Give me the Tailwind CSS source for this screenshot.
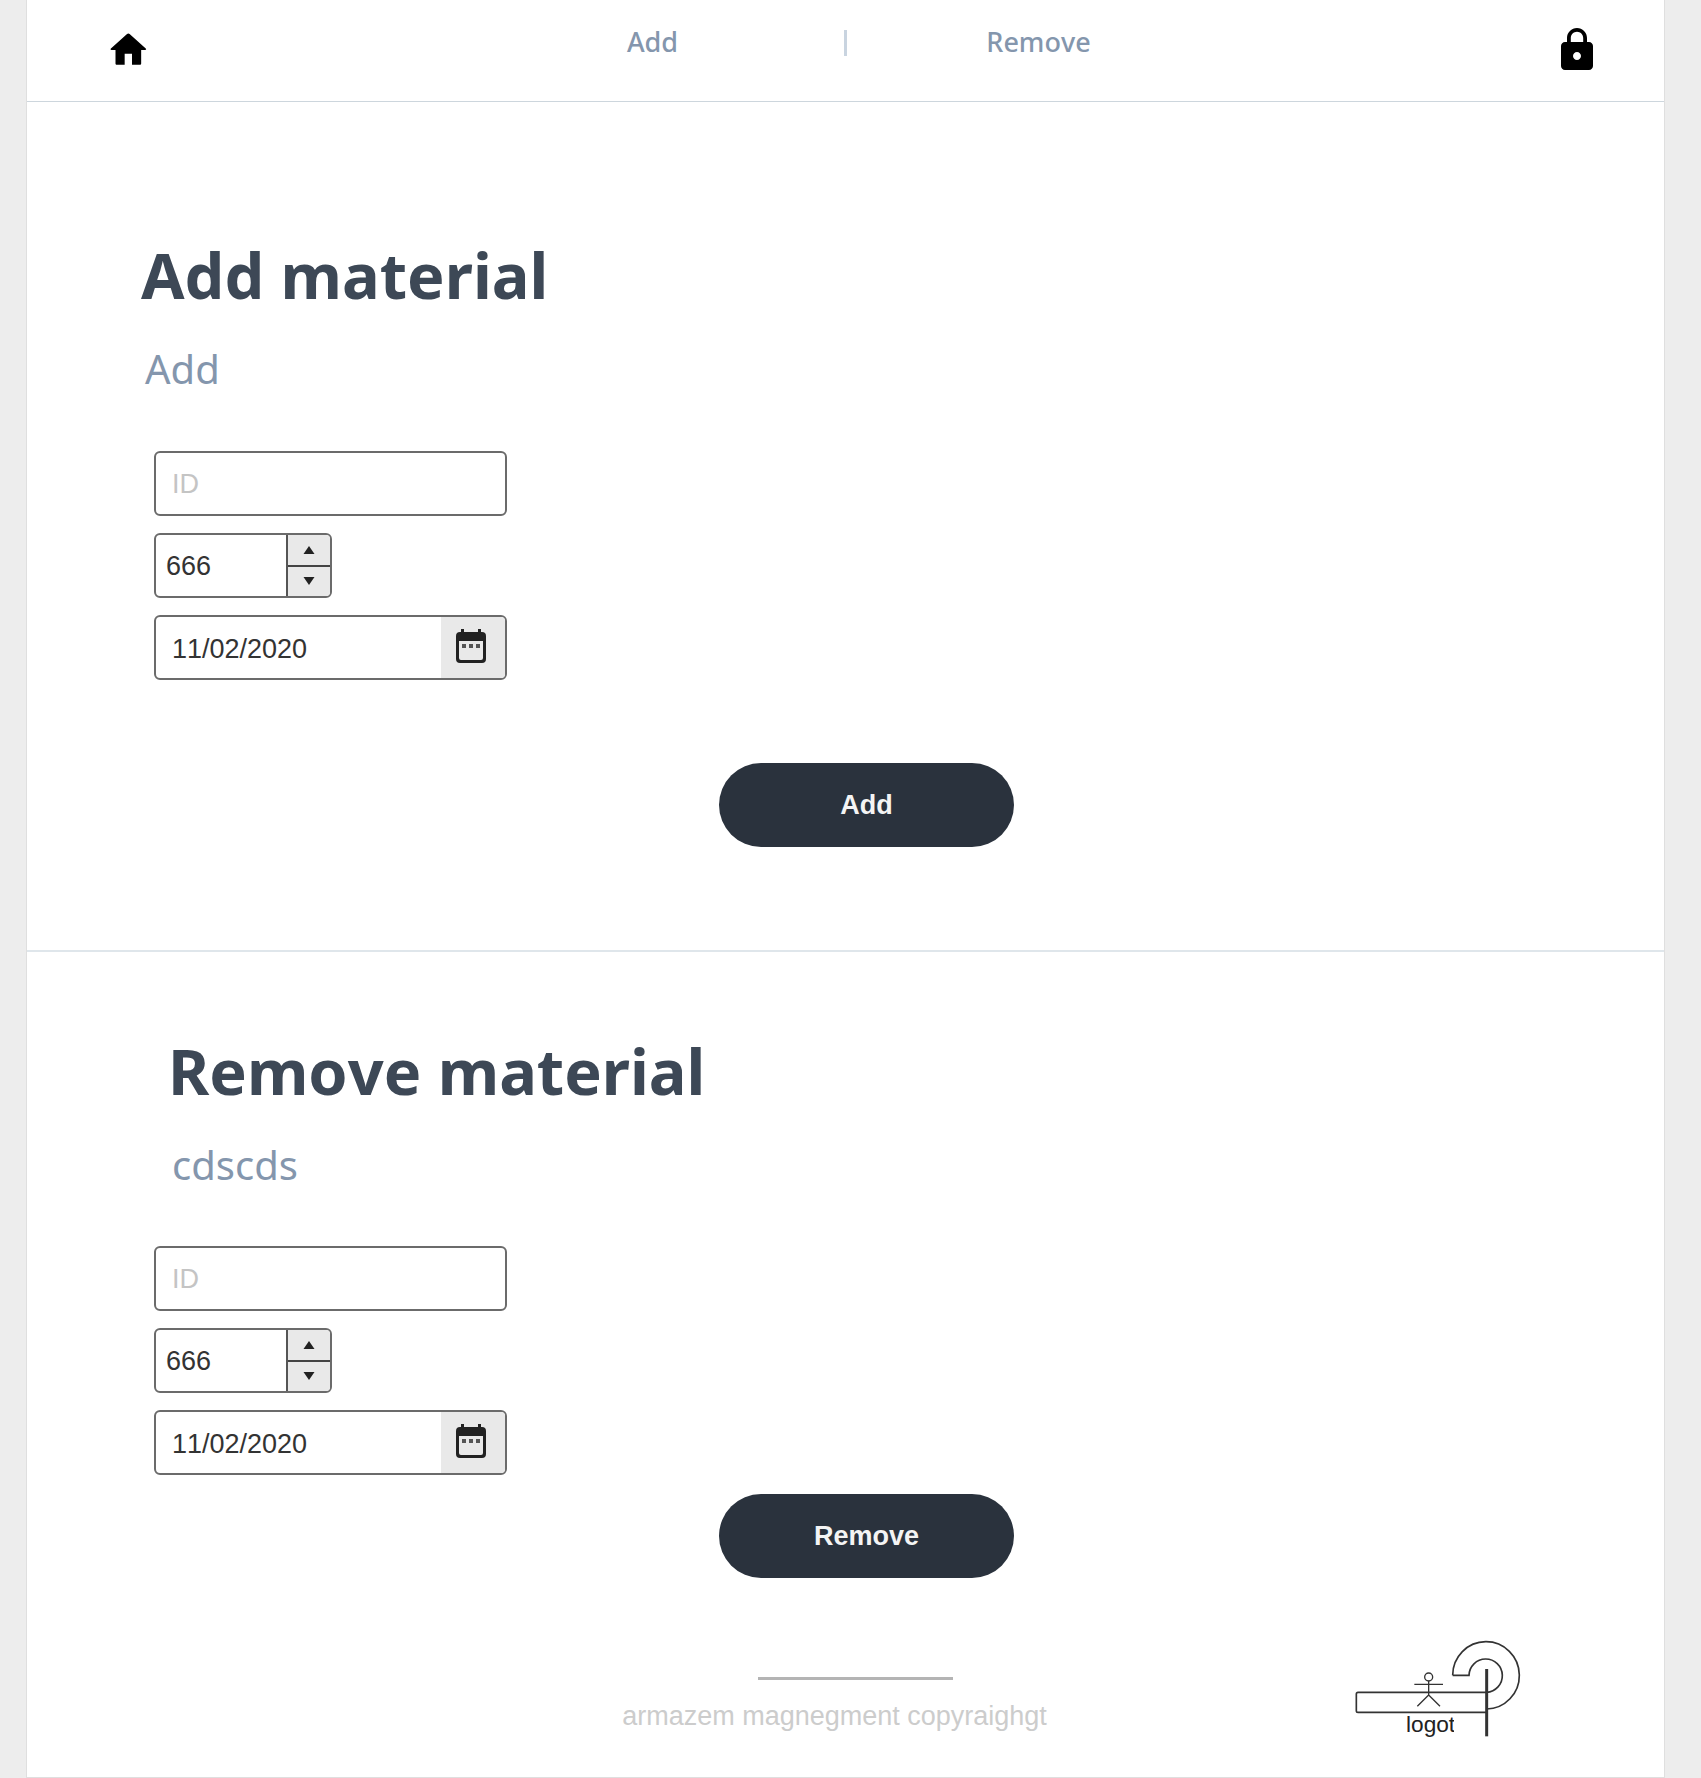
<!DOCTYPE html>
<html lang="en">
<head>
<meta charset="utf-8">
<meta name="viewport" content="width=device-width, initial-scale=1">
<title>Armazem</title>
<script src="https://cdn.jsdelivr.net/npm/@tailwindcss/browser@4"></script>
</head>
<body class="bg-[#ededed] font-['Liberation_Sans',Arial,sans-serif] text-[27px] leading-8 text-[#333] [font-kerning:none]">
<div class="ml-[26px] mr-[36px] border-x border-b border-[#dfdfdf] bg-white">

  <header class="grid h-[102px] grid-cols-[1fr_auto_1fr] items-start border-b border-[#cdd6dd] pl-[83px] pr-[70px]">
    <a href="#" aria-label="Home" class="mt-7 justify-self-start">
      <svg class="h-11 w-11" viewBox="2 0 24 24" fill="#000"><path d="M10 20v-6h4v6h4.300c.4 0 .7-.3.7-.7V12h2.200c.5 0 .7-.5.3-.8L12.700 3.300c-.4-.4-1-.4-1.400 0L2.500 11.200c-.4.3-.2.8.3.8H5v7.300c0 .4.3.7.7.7H10z"/></svg>
    </a>
    <nav class="mr-[13px] mt-6 grid w-[579px] grid-cols-3 justify-items-center font-['Noto_Sans',sans-serif] font-medium leading-9 text-[#8496ad]">
      <a href="#add">Add</a>
      <span class="mt-[6px] h-[26px] w-[3px] bg-[#c9d4e0]"></span>
      <a href="#remove">Remove</a>
    </nav>
    <a href="#" aria-label="Lock" class="mt-7 justify-self-end">
      <svg class="h-[42px] w-[34px]" viewBox="4 1 16 21" fill="#000"><path d="M18 8h-1V6c0-2.760-2.240-5-5-5S7 3.240 7 6v2H6c-1.100 0-2 .9-2 2v10c0 1.100.9 2 2 2h12c1.100 0 2-.9 2-2V10c0-1.100-.9-2-2-2zm-6 9c-1.100 0-2-.9-2-2s.9-2 2-2 2 .9 2 2-.9 2-2 2zm3.100-9H8.900V6c0-1.710 1.390-3.100 3.100-3.100s3.100 1.390 3.100 3.100v2z"/></svg>
    </a>
  </header>

  <main>
    <section id="add" class="border-b-2 border-[#dfe6eb] px-[127px] pb-[103px] pt-[133px]">
      <div class="-ml-[13px] font-['Noto_Sans',sans-serif]">
        <h1 class="text-[63px] font-bold leading-[80px] text-[#3d4856]">Add material</h1>
        <p class="ml-1 mt-[26px] text-[40px] leading-[56px] text-[#8496ad]">Add</p>
      </div>
      <form>
        <div class="mt-[54px] flex flex-col items-start gap-[17px]">
          <input type="text" aria-label="ID" placeholder="ID" class="h-[65px] w-[353px] rounded-md border-2 border-[#6b6b6b] bg-white px-4 pt-[2px] placeholder:text-[#c4c4c4]">
          <div class="flex h-[65px] w-[178px] overflow-hidden rounded-md border-2 border-[#6b6b6b] bg-white">
            <input type="number" aria-label="Quantity" value="666" class="min-w-0 flex-1 pl-[10px] [appearance:textfield] [&::-webkit-inner-spin-button]:appearance-none">
            <div class="flex w-11 flex-col border-l-2 border-[#555] bg-[#e9e9e9]">
              <button type="button" aria-label="Increase" class="flex flex-1 items-center justify-center border-b-2 border-[#444]"><svg class="h-2 w-3" viewBox="0 0 12 8" fill="#222"><path d="M6 0l5.500 8H.5z"/></svg></button>
              <button type="button" aria-label="Decrease" class="flex flex-1 items-center justify-center"><svg class="h-2 w-3" viewBox="0 0 12 8" fill="#222"><path d="M6 8L.5 0h11z"/></svg></button>
            </div>
          </div>
          <div class="flex h-[65px] w-[353px] overflow-hidden rounded-md border-2 border-[#6b6b6b] bg-white">
            <input type="text" aria-label="Date" value="11/02/2020" class="min-w-0 flex-1 pl-4 pt-[2px]">
            <button type="button" aria-label="Open calendar" class="flex w-16 items-center justify-center bg-[#e9e9e9] pb-1 pr-1">
              <svg class="h-[34px] w-[30px]" viewBox="0 0 30 34"><path fill="#222" d="M5 0h3v3h14V0h3v3h1q4 0 4 4v23q0 4-4 4H4q-4 0-4-4V7q0-4 4-4h1zM3 12v17q0 2 2 2h20q2 0 2-2V12z"/><path fill="#555" d="M6 15h4v4H6zm7 0h4v4h-4zm7 0h4v4h-4z"/></svg>
            </button>
          </div>
        </div>
        <div class="mt-[83px] flex justify-center pl-[42px]">
          <button type="submit" class="h-[84px] w-[295px] rounded-full bg-[#2a323d] font-bold text-[#f4f4f4]">Add</button>
        </div>
      </form>
    </section>

    <section id="remove" class="px-[127px] pt-[79px]">
      <div class="ml-[14px] font-['Noto_Sans',sans-serif]">
        <h2 class="text-[63px] font-bold leading-[80px] text-[#3d4856]">Remove material</h2>
        <p class="ml-1 mt-[26px] text-[40px] leading-[56px] text-[#8496ad]">cdscds</p>
      </div>
      <form>
        <div class="mt-[53px] flex flex-col items-start gap-[17px]">
          <input type="text" aria-label="ID" placeholder="ID" class="h-[65px] w-[353px] rounded-md border-2 border-[#6b6b6b] bg-white px-4 pt-[2px] placeholder:text-[#c4c4c4]">
          <div class="flex h-[65px] w-[178px] overflow-hidden rounded-md border-2 border-[#6b6b6b] bg-white">
            <input type="number" aria-label="Quantity" value="666" class="min-w-0 flex-1 pl-[10px] [appearance:textfield] [&::-webkit-inner-spin-button]:appearance-none">
            <div class="flex w-11 flex-col border-l-2 border-[#555] bg-[#e9e9e9]">
              <button type="button" aria-label="Increase" class="flex flex-1 items-center justify-center border-b-2 border-[#444]"><svg class="h-2 w-3" viewBox="0 0 12 8" fill="#222"><path d="M6 0l5.500 8H.5z"/></svg></button>
              <button type="button" aria-label="Decrease" class="flex flex-1 items-center justify-center"><svg class="h-2 w-3" viewBox="0 0 12 8" fill="#222"><path d="M6 8L.5 0h11z"/></svg></button>
            </div>
          </div>
          <div class="flex h-[65px] w-[353px] overflow-hidden rounded-md border-2 border-[#6b6b6b] bg-white">
            <input type="text" aria-label="Date" value="11/02/2020" class="min-w-0 flex-1 pl-4 pt-[2px]">
            <button type="button" aria-label="Open calendar" class="flex w-16 items-center justify-center bg-[#e9e9e9] pb-1 pr-1">
              <svg class="h-[34px] w-[30px]" viewBox="0 0 30 34"><path fill="#222" d="M5 0h3v3h14V0h3v3h1q4 0 4 4v23q0 4-4 4H4q-4 0-4-4V7q0-4 4-4h1zM3 12v17q0 2 2 2h20q2 0 2-2V12z"/><path fill="#555" d="M6 15h4v4H6zm7 0h4v4h-4zm7 0h4v4h-4z"/></svg>
            </button>
          </div>
        </div>
        <div class="mt-[19px] flex justify-center pl-[42px]">
          <button type="submit" class="h-[84px] w-[295px] rounded-full bg-[#2a323d] font-bold text-[#f4f4f4]">Remove</button>
        </div>
      </form>
    </section>
  </main>

  <footer class="grid grid-cols-[1fr_auto_1fr] items-start px-[142px] pb-[39px] pt-[61px]">
    <div></div>
    <div class="flex flex-col items-center pt-[38px]">
      <hr class="ml-5 w-[195px] border-t-[3px] border-[#b4b4b4]">
      <p class="mt-5 pr-[22px] text-[#ccc]">armazem magnegment copyraighgt</p>
    </div>
    <svg class="h-[99px] w-[168px] justify-self-end" viewBox="45 55 504 297" fill="none" stroke="#333" stroke-width="5" role="img" aria-label="Logo">
      <path d="M443 215H57q-5 0-5 5v50q0 5 5 5h386M341 164a100 101 0 1 1 102 101M341 164h49a50 50 0 1 1 53 51"/>
      <path stroke-width="9" d="M443 145v202"/>
      <path stroke-width="4" d="M269 180v43M226 191h86M269 223l-34 34M269 223l34 34"/>
      <circle cx="269" cy="169" r="12" stroke-width="4"/>
      <svg x="195" y="270" width="150" height="82" viewBox="195 270 150 82"><text x="201" y="335" font-family="Liberation Sans, Arial, sans-serif" font-size="68" fill="#222" stroke="none">logot</text></svg>
    </svg>
  </footer>
</div>
</body>
</html>
